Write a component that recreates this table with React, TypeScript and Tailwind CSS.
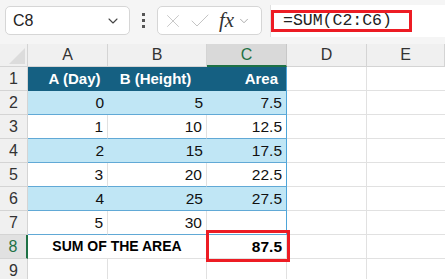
import { ChevronDown, X, Check } from "lucide-react";

const cols = ["A", "B", "C", "D", "E"];
const data = [
  [0, 5, "7.5"],
  [1, 10, "12.5"],
  [2, 15, "17.5"],
  [3, 20, "22.5"],
  [4, 25, "27.5"],
  [5, 30, ""],
];

const font = { fontFamily: '"Liberation Sans", Arial, sans-serif' };

function Toolbar() {
  return (
    <div className="h-[44px] bg-[#f5f5f5] flex items-start pt-[6px] relative">
      <div className="ml-[5px] w-[125px] h-[29px] bg-white border border-[#d6d6d6] rounded-[5px] flex items-center justify-between pl-[7px] pr-[8px]">
        <span className="text-[16px] text-[#222]">C8</span>
        <ChevronDown size={16} strokeWidth={1.6} className="text-[#444]" />
      </div>
      <div className="w-[27px] h-[29px] flex flex-col items-center justify-center gap-[3px]">
        <span className="w-[3px] h-[3px] bg-[#555]" />
        <span className="w-[3px] h-[3px] bg-[#555]" />
        <span className="w-[3px] h-[3px] bg-[#555]" />
      </div>
      <div className="w-[105px] h-[29px] bg-white border border-[#d6d6d6] rounded-[5px] flex items-center pl-[4px]">
        <X size={22} strokeWidth={1} className="text-[#c4c4c4]" />
        <Check size={24} strokeWidth={1} className="text-[#c4c4c4] ml-[4px]" />
        <span
          className="ml-[7px] text-[21px] italic text-[#333] leading-none"
          style={{ fontFamily: '"Liberation Serif", "Times New Roman", serif' }}
        >
          fx
        </span>
        <ChevronDown size={14} strokeWidth={1.4} className="text-[#999] ml-[3px]" />
      </div>
      <div className="ml-[8px] flex-1 h-[32px] mt-[-1px] bg-white border-l border-[#e0e0e0] flex items-center">
        <div className="w-[141px] h-[22px] border-[3px] border-[#ed1c24] flex items-center pl-[9px]">
          <span
            className="text-[16.5px] text-[#222] leading-none"
            style={{ fontFamily: '"Liberation Mono", "Courier New", monospace' }}
          >
            =SUM(C2:C6)
          </span>
        </div>
      </div>
    </div>
  );
}

export default function App() {
  return (
    <div className="w-[445px] h-[279px] overflow-hidden bg-white relative" style={font}>
      <Toolbar />
      <div className="grid grid-cols-[28px_80px_99px_80px_80px_78px] grid-rows-[23px_repeat(9,24px)]">
        {/* corner */}
        <div className="bg-[#f0f0f0] border-r border-b border-[#d4d4d4] flex items-end justify-end p-[2px]">
          <div className="w-0 h-0 border-l-[16px] border-l-transparent border-b-[16px] border-b-[#dcdcdc]" />
        </div>
        {cols.map((c) => (
          <div
            key={c}
            className={
              c === "C"
                ? "bg-[#d9d9d9] border-r border-[#c8c8c8] border-b-2 border-b-[#1e7145] flex items-center justify-center text-[16px] text-[#1e7145]"
                : "bg-[#f0f0f0] border-r border-b border-[#d4d4d4] flex items-center justify-center text-[16px] text-[#333]"
            }
          >
            {c}
          </div>
        ))}

        {/* row 1 header */}
        <div className="bg-[#f0f0f0] border-r border-b border-[#d4d4d4] flex items-center justify-center text-[16px] text-[#333]">1</div>
        <div className="bg-[#156082] text-white font-bold text-[15px] flex items-center justify-center pl-[13px]">A (Day)</div>
        <div className="bg-[#156082] text-white font-bold text-[15px] flex items-center justify-center pr-[4px]">B (Height)</div>
        <div className="bg-[#156082] text-white font-bold text-[15px] flex items-center justify-end pr-[8px] border-r border-[#4ea5d9]">Area</div>
        <div className="border-r border-b border-[#e1e1e1]" />
        <div className="border-b border-[#e1e1e1]" />

        {data.map((r, i) => {
          const blue = i % 2 === 0;
          const cell = blue
            ? "bg-[#c0e6f5] border-b border-[#61a9d6] flex items-center justify-end pr-[4px] text-[15.5px] text-[#111]"
            : "bg-white border-b border-[#61a9d6] flex items-center justify-end pr-[4px] text-[15.5px] text-[#111]";
          return [
            <div key={`h${i}`} className="bg-[#f0f0f0] border-r border-b border-[#d4d4d4] flex items-center justify-center text-[16px] text-[#333]">
              {i + 2}
            </div>,
            <div key={`a${i}`} className={`${cell} ${blue ? "" : "border-r border-r-[#e1e1e1]"}`}>{r[0]}</div>,
            <div key={`b${i}`} className={`${cell} ${blue ? "" : "border-r border-r-[#e1e1e1]"}`}>{r[1]}</div>,
            <div key={`c${i}`} className={`${cell} border-r border-r-[#4ea5d9]`}>{r[2]}</div>,
            <div key={`d${i}`} className="border-r border-b border-[#e1e1e1]" />,
            <div key={`e${i}`} className="border-b border-[#e1e1e1]" />,
          ];
        })}

        {/* row 8 */}
        <div className="bg-[#e1e1e1] border-r-2 border-r-[#1e7145] border-b border-b-[#d4d4d4] flex items-center justify-center text-[16px] text-[#1e7145]">8</div>
        <div className="col-span-2 border-r border-b border-[#e1e1e1] flex items-center justify-center text-[14px] font-bold text-black">
          SUM OF THE AREA
        </div>
        <div className="border-r border-b border-[#e1e1e1] flex items-center justify-end pr-[4px] text-[15.5px] font-bold text-black">87.5</div>
        <div className="border-r border-b border-[#e1e1e1]" />
        <div className="border-b border-[#e1e1e1]" />

        {/* row 9 */}
        <div className="bg-[#f0f0f0] border-r border-b border-[#d4d4d4] flex items-center justify-center text-[16px] text-[#333]">9</div>
        <div className="border-r border-[#e1e1e1]" />
        <div className="border-r border-[#e1e1e1]" />
        <div className="border-r border-[#e1e1e1]" />
        <div className="border-r border-[#e1e1e1]" />
        <div />
      </div>
      {/* selection highlight on C8 */}
      <div className="absolute left-[206px] top-[230px] w-[84px] h-[32px] border-[3px] border-[#ed1c24] pointer-events-none" />
    </div>
  );
}
